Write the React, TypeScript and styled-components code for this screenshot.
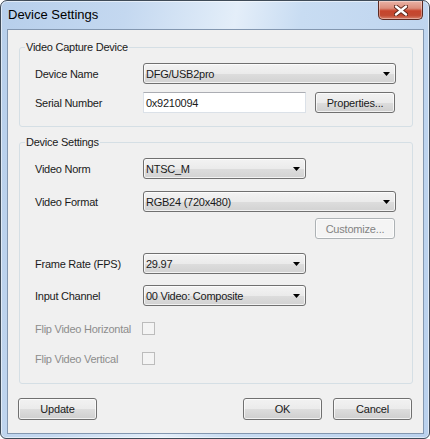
import React from "react";
import styled, { createGlobalStyle } from "styled-components";

const GlobalStyle = createGlobalStyle`
  html, body {
    margin: 0;
    padding: 0;
    background: #ffffff;
  }
  * {
    box-sizing: border-box;
  }
`;

const ComboArrow: React.FC = () => (
  <svg width="7" height="4" viewBox="0 0 7 4">
    <path d="M0 0 H7 L3.5 4 Z" fill="#000" />
  </svg>
);

const CloseGlyph: React.FC = () => (
  <svg width="14" height="11" viewBox="0 0 14 11">
    <path
      d="M2 1.5 L12 9.5 M12 1.5 L2 9.5"
      stroke="#5a2418"
      strokeWidth="4.2"
      strokeLinecap="round"
    />
    <path
      d="M2 1.5 L12 9.5 M12 1.5 L2 9.5"
      stroke="#ffffff"
      strokeWidth="2.4"
      strokeLinecap="round"
    />
  </svg>
);

type ComboProps = { value: string; wide?: boolean };

const Combo: React.FC<ComboProps> = ({ value, wide }) => (
  <ComboBox $wide={wide}>
    <ComboText>{value}</ComboText>
    <ComboArrow />
  </ComboBox>
);

const App: React.FC = () => {
  return (
    <>
      <GlobalStyle />
      <Window>
        <TitleBar>
          <Title>Device Settings</Title>
          <CloseButton>
            <CloseGlyph />
          </CloseButton>
        </TitleBar>
        <Client>
          <Group $top={10}>
            <Legend>Video Capture Device</Legend>
            <Row>
              <Label>Device Name</Label>
              <Combo value="DFG/USB2pro" wide />
            </Row>
            <Row $top={8}>
              <Label>Serial Number</Label>
              <TextInput>0x9210094</TextInput>
              <SideButton>Properties...</SideButton>
            </Row>
          </Group>

          <Group $top={8} $bottom={14}>
            <Legend>Device Settings</Legend>
            <Row>
              <Label>Video Norm</Label>
              <Combo value="NTSC_M" />
            </Row>
            <Row $top={12}>
              <Label>Video Format</Label>
              <Combo value="RGB24 (720x480)" wide />
            </Row>
            <Row $top={6}>
              <Label />
              <Spacer />
              <SideButton disabled>Customize...</SideButton>
            </Row>
            <Row $top={14}>
              <Label>Frame Rate (FPS)</Label>
              <Combo value="29.97" />
            </Row>
            <Row $top={11}>
              <Label>Input Channel</Label>
              <Combo value="00 Video: Composite" />
            </Row>
            <Row $top={12}>
              <Label $disabled>Flip Video Horizontal</Label>
              <CheckBox />
            </Row>
            <Row $top={9}>
              <Label $disabled>Flip Video Vertical</Label>
              <CheckBox />
            </Row>
          </Group>

          <ButtonBar>
            <DialogButton>Update</DialogButton>
            <ButtonGroup>
              <DialogButton>OK</DialogButton>
              <DialogButton>Cancel</DialogButton>
            </ButtonGroup>
          </ButtonBar>
        </Client>
      </Window>
    </>
  );
};

export default App;

const uiFont = `"Liberation Sans", Arial, sans-serif`;

const Window = styled.div`
  width: 430px;
  height: 439px;
  display: flex;
  flex-direction: column;
  border: 1px solid #3f4b58;
  border-radius: 7px 7px 6px 6px;
  padding: 0 5px 4px 6px;
  background: linear-gradient(
    100deg,
    #b7cfeb 0%,
    #c4d8f0 25%,
    #dce9f7 42%,
    #e4eef9 47%,
    #c8dcf2 60%,
    #bad1ed 100%
  );
  box-shadow: inset 0 0 0 1px rgba(255, 255, 255, 0.55);
  font-family: ${uiFont};
`;

const TitleBar = styled.div`
  height: 28px;
  display: flex;
  justify-content: space-between;
  align-items: flex-start;
`;

const Title = styled.div`
  font-family: ${uiFont};
  font-size: 13px;
  line-height: 28px;
  padding-left: 1px;
  color: #000;
`;

const CloseButton = styled.div`
  width: 45px;
  height: 19px;
  margin-right: 1px;
  display: flex;
  align-items: center;
  justify-content: center;
  border: 1px solid #5c2a22;
  border-top: none;
  border-radius: 0 0 5px 5px;
  background: linear-gradient(
    180deg,
    #eab3a6 0%,
    #dc8e7c 40%,
    #c7442c 55%,
    #c24a32 80%,
    #d8806a 100%
  );
  box-shadow: inset 0 0 0 1px rgba(255, 255, 255, 0.35);
`;

const Client = styled.div`
  flex: 1;
  display: flex;
  flex-direction: column;
  border: 1px solid #8397b0;
  background: #f0f0f0;
  padding: 0 10px 12px 11px;
`;

const Group = styled.fieldset<{ $top?: number; $bottom?: number }>`
  margin: ${(p) => p.$top ?? 0}px 0 0 0;
  padding: 9px 10px ${(p) => p.$bottom ?? 13}px 15px;
  border: 1px solid #d5dfe5;
  border-radius: 3px;
  min-width: 0;
`;

const Legend = styled.legend`
  margin-left: -10px;
  padding: 0 1px;
  font-family: ${uiFont};
  font-size: 11px;
  letter-spacing: -0.25px;
  line-height: 14px;
  color: #1a1a1a;
`;

const Row = styled.div<{ $top?: number }>`
  display: flex;
  align-items: center;
  height: 21px;
  margin-top: ${(p) => p.$top ?? 0}px;
`;

const Label = styled.div<{ $disabled?: boolean }>`
  width: 108px;
  flex: none;
  font-size: 11px;
  letter-spacing: -0.25px;
  color: ${(p) => (p.$disabled ? "#8d8d8d" : "#1a1a1a")};
  white-space: nowrap;
`;

const ComboBox = styled.div<{ $wide?: boolean }>`
  width: ${(p) => (p.$wide ? 253 : 163)}px;
  height: 21px;
  display: flex;
  align-items: center;
  justify-content: space-between;
  padding: 0 5px 0 2px;
  border: 1px solid #707070;
  border-radius: 3px;
  background: linear-gradient(
    180deg,
    #f3f3f3 0%,
    #ebebeb 50%,
    #dddddd 51%,
    #d2d2d2 100%
  );
  box-shadow: inset 0 0 0 1px rgba(255, 255, 255, 0.7);
`;

const ComboText = styled.span`
  font-size: 11px;
  letter-spacing: -0.25px;
  color: #1a1a1a;
`;

const TextInput = styled.div`
  width: 163px;
  height: 21px;
  display: flex;
  align-items: center;
  padding-left: 2px;
  border: 1px solid #dbe1e8;
  border-top-color: #abadb3;
  background: #ffffff;
  font-size: 11px;
  letter-spacing: -0.25px;
  color: #1a1a1a;
`;

const Spacer = styled.div`
  width: 163px;
`;

const SideButton = styled.div<{ disabled?: boolean }>`
  width: 80px;
  height: 21px;
  margin-left: 9px;
  display: flex;
  align-items: center;
  justify-content: center;
  border: 1px solid ${(p) => (p.disabled ? "#adb2b5" : "#707070")};
  border-radius: 3px;
  background: ${(p) =>
    p.disabled
      ? "#f4f4f4"
      : "linear-gradient(180deg, #f2f2f2 0%, #ebebeb 50%, #dddddd 51%, #cfcfcf 100%)"};
  box-shadow: inset 0 0 0 1px rgba(255, 255, 255, 0.7);
  font-size: 11px;
  letter-spacing: -0.2px;
  color: ${(p) => (p.disabled ? "#838383" : "#1a1a1a")};
`;

const CheckBox = styled.div`
  width: 13px;
  height: 13px;
  margin-left: -1px;
  border: 1px solid #bcbcbc;
  background: #f4f4f4;
`;

const ButtonBar = styled.div`
  margin: 14px 1px 0 -1px;
  display: flex;
  justify-content: space-between;
`;

const ButtonGroup = styled.div`
  display: flex;
  gap: 11px;
`;

const DialogButton = styled.div`
  width: 79px;
  height: 22px;
  display: flex;
  align-items: center;
  justify-content: center;
  border: 1px solid #707070;
  border-radius: 3px;
  background: linear-gradient(
    180deg,
    #f2f2f2 0%,
    #ebebeb 50%,
    #dddddd 51%,
    #cfcfcf 100%
  );
  box-shadow: inset 0 0 0 1px rgba(255, 255, 255, 0.7);
  font-size: 11px;
  letter-spacing: -0.2px;
  color: #1a1a1a;
`;
